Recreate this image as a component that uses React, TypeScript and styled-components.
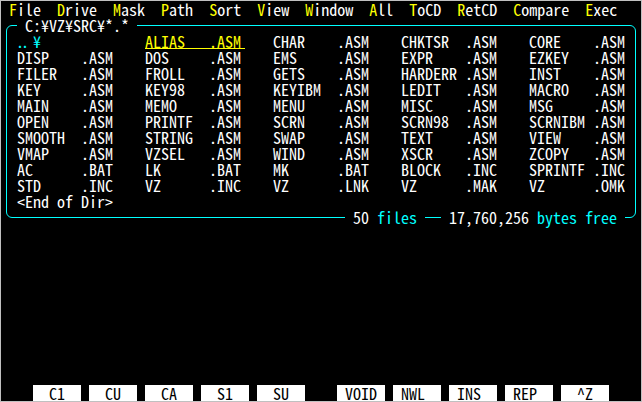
import React from 'react';
import styled, { createGlobalStyle } from 'styled-components';

const GlobalStyle = createGlobalStyle`
  html, body { margin: 0; padding: 0; background: #c0c0c0; }
  body { width: 642px; height: 402px; overflow: hidden; }
`;

const Screen = styled.div`
  margin: 1px;
  width: 640px;
  height: 400px;
  background: #000;
  display: flex;
  flex-direction: column;
  font-family: "Noto Sans Mono CJK JP", "Noto Sans CJK JP", "Liberation Mono", monospace;
  font-size: 16px;
  font-weight: 300;
  line-height: 16px;
  color: #fff;
  white-space: pre;
  overflow: hidden;
`;

const MenuBar = styled.nav`
  display: flex;
  gap: 16px;
  height: 16px;
  padding-left: 8px;
`;

const Hot = styled.span`
  color: #ffff00;
`;

const Panel = styled.section`
  position: relative;
  margin: 8px 5px 0 5px;
  border: 1px solid #00ffff;
  border-radius: 6px;
  padding: 7px 0 8px 10px;
`;

const PathTitle = styled.span`
  position: absolute;
  top: -9px;
  left: 10px;
  padding: 0 8px;
  background: #000;
  height: 16px;
`;

const FileGrid = styled.div`
  display: grid;
  grid-template-columns: repeat(5, 128px);
  grid-auto-rows: 16px;
`;

const Entry = styled.div<{ $cursor?: boolean; $dir?: boolean }>`
  display: flex;
  width: ${(p) => (p.$cursor ? '100px' : '96px')};
  color: ${(p) => (p.$cursor ? '#ffff00' : p.$dir ? '#00ffff' : '#ffffff')};
  box-shadow: ${(p) => (p.$cursor ? 'inset 0 -1px 0 #ffff00' : 'none')};
`;

const Name = styled.span`
  width: 64px;
`;

const ParentDots = styled.span`
  display: inline-block;
  width: 16px;
  letter-spacing: -3px;
  text-indent: -1px;
`;

const Ext = styled.span`
  width: 32px;
`;

const EndMark = styled.div`
  grid-column: 1 / -1;
`;

const Status = styled.div`
  position: absolute;
  right: 10px;
  bottom: -8px;
  display: flex;
  gap: 16px;
  height: 16px;
`;

const StatusLabel = styled.span`
  padding: 0 8px;
  background: #000;
`;

const Unit = styled.span`
  color: #00ffff;
`;

const FKeyBar = styled.footer`
  margin-top: auto;
  display: flex;
  gap: 32px;
  height: 16px;
  padding-left: 32px;
`;

const FKeyGroup = styled.div`
  display: flex;
  gap: 8px;
`;

const FKey = styled.span`
  width: 48px;
  height: 16px;
  background: #ffffff;
  color: #000000;
`;

const menu = ['File', 'Drive', 'Mask', 'Path', 'Sort', 'View', 'Window', 'All', 'ToCD', 'RetCD', 'Compare', 'Exec'];

const files: [string, string][] = [
  ['..¥', ''], ['ALIAS', '.ASM'], ['CHAR', '.ASM'], ['CHKTSR', '.ASM'], ['CORE', '.ASM'],
  ['DISP', '.ASM'], ['DOS', '.ASM'], ['EMS', '.ASM'], ['EXPR', '.ASM'], ['EZKEY', '.ASM'],
  ['FILER', '.ASM'], ['FROLL', '.ASM'], ['GETS', '.ASM'], ['HARDERR', '.ASM'], ['INST', '.ASM'],
  ['KEY', '.ASM'], ['KEY98', '.ASM'], ['KEYIBM', '.ASM'], ['LEDIT', '.ASM'], ['MACRO', '.ASM'],
  ['MAIN', '.ASM'], ['MEMO', '.ASM'], ['MENU', '.ASM'], ['MISC', '.ASM'], ['MSG', '.ASM'],
  ['OPEN', '.ASM'], ['PRINTF', '.ASM'], ['SCRN', '.ASM'], ['SCRN98', '.ASM'], ['SCRNIBM', '.ASM'],
  ['SMOOTH', '.ASM'], ['STRING', '.ASM'], ['SWAP', '.ASM'], ['TEXT', '.ASM'], ['VIEW', '.ASM'],
  ['VMAP', '.ASM'], ['VZSEL', '.ASM'], ['WIND', '.ASM'], ['XSCR', '.ASM'], ['ZCOPY', '.ASM'],
  ['AC', '.BAT'], ['LK', '.BAT'], ['MK', '.BAT'], ['BLOCK', '.INC'], ['SPRINTF', '.INC'],
  ['STD', '.INC'], ['VZ', '.INC'], ['VZ', '.LNK'], ['VZ', '.MAK'], ['VZ', '.OMK'],
];

const keysLeft = ['  C1  ', '  CU  ', '  CA  ', '  S1  ', '  SU  '];
const keysRight = [' VOID ', ' NWL  ', ' INS  ', ' REP  ', '  ^Z  '];

export default function App() {
  return (
    <>
      <GlobalStyle />
      <Screen>
        <MenuBar>
          {menu.map((m) => (
            <span key={m}>
              <Hot>{m[0]}</Hot>
              {m.slice(1)}
            </span>
          ))}
        </MenuBar>
        <Panel>
          <PathTitle>C:¥VZ¥SRC¥*.*</PathTitle>
          <FileGrid>
            {files.map(([n, e], i) => (
              <Entry key={i} $cursor={i === 1} $dir={i === 0}>
                {i === 0 ? (
                  <Name>
                    <ParentDots>..</ParentDots>¥
                  </Name>
                ) : (
                  <Name>{n}</Name>
                )}
                <Ext>{e}</Ext>
              </Entry>
            ))}
            <EndMark>{'<End of Dir>'}</EndMark>
          </FileGrid>
          <Status>
            <StatusLabel>
              50 <Unit>files</Unit>
            </StatusLabel>
            <StatusLabel>
              17,760,256 <Unit>bytes free</Unit>
            </StatusLabel>
          </Status>
        </Panel>
        <FKeyBar>
          <FKeyGroup>
            {keysLeft.map((k) => (
              <FKey key={k}>{k}</FKey>
            ))}
          </FKeyGroup>
          <FKeyGroup>
            {keysRight.map((k) => (
              <FKey key={k}>{k}</FKey>
            ))}
          </FKeyGroup>
        </FKeyBar>
      </Screen>
    </>
  );
}
